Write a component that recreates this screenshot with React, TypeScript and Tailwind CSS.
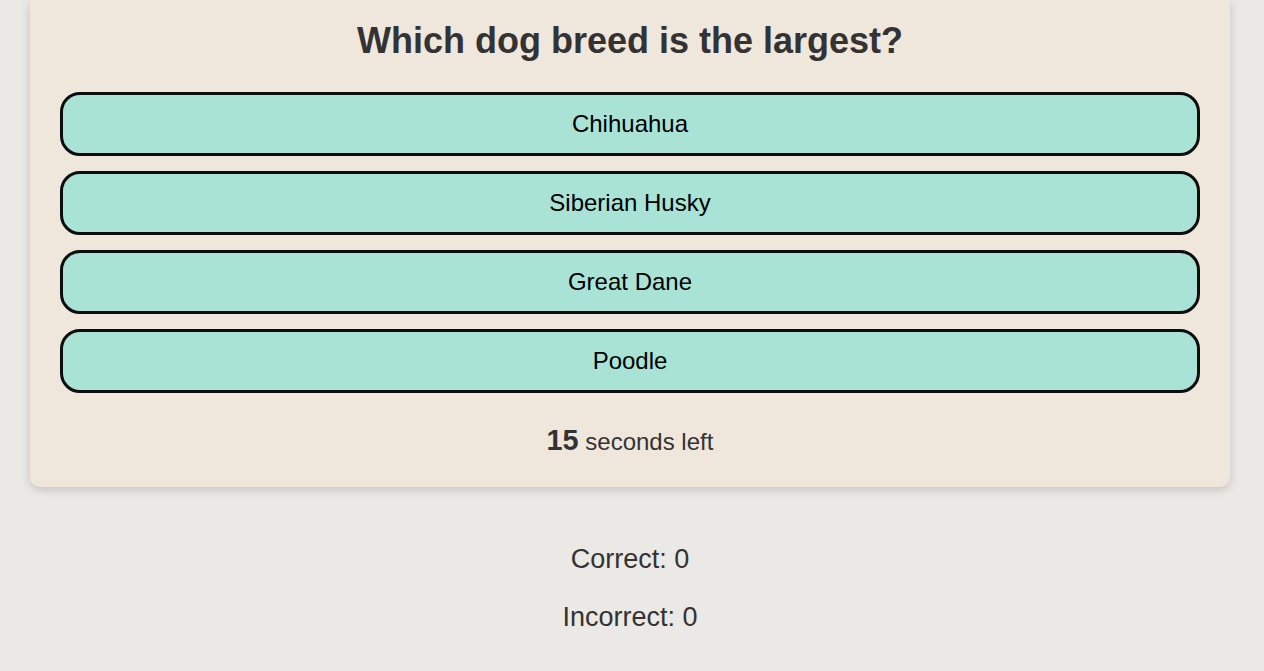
const OPTIONS = ["Chihuahua", "Siberian Husky", "Great Dane", "Poodle"];

function AnswerButton({ label }: { label: string }) {
  return (
    <button
      type="button"
      className="h-[64px] w-full rounded-[20px] border-[3px] border-[#0d0d0d] bg-[#a8e3d6] text-[24px] text-black"
    >
      {label}
    </button>
  );
}

export default function App() {
  return (
    <div className="min-h-[671px] bg-[#ebe9e5] font-['Liberation_Sans',Arial,sans-serif] text-[#333]">
      <div className="ml-[30px] w-[1200px] rounded-b-[10px] bg-[#efe6dc] px-[30px] pb-[28px] pt-[19px] shadow-[0_3px_10px_rgba(0,0,0,0.16)]">
        <h2 className="text-center text-[36px] font-bold leading-[43px]">
          Which dog breed is the largest?
        </h2>
        <div className="mt-[30px] flex flex-col gap-[15px]">
          {OPTIONS.map((option) => (
            <AnswerButton key={option} label={option} />
          ))}
        </div>
        <p className="mt-[32px] text-center text-[24px] leading-[34px]">
          <strong className="text-[28.8px] leading-none">15</strong> seconds left
        </p>
      </div>
      <div className="ml-[30px] mt-[57px] flex w-[1200px] flex-col items-center gap-[27px] text-[27px] leading-[31px]">
        <p>Correct: 0</p>
        <p>Incorrect: 0</p>
      </div>
    </div>
  );
}
